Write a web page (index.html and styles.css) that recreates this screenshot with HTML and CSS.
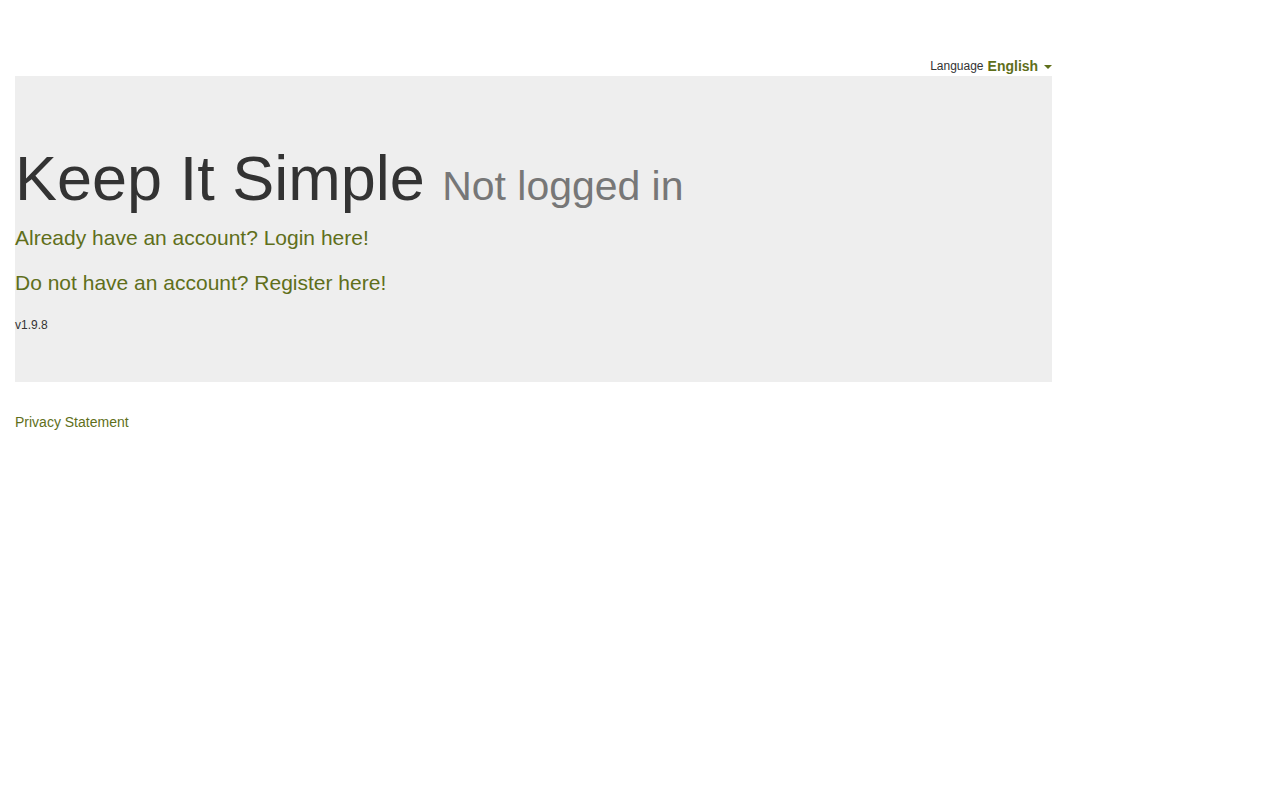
FILE: index.html
```html
<!DOCTYPE html>
<html lang="en">
<head>
    <meta charset="UTF-8">
    <title>Keep It Simple</title>
    <link rel="stylesheet" href="styles.css">
</head>
<body>
    <div class="container">
        <div class="lang-bar">
            <span class="lang-label">Language</span>
            <a href="#" class="lang-toggle">English <span class="caret"></span></a>
        </div>

        <div class="jumbotron">
            <h1>Keep It Simple <small>Not logged in</small></h1>
            <p><a href="#">Already have an account? Login here!</a></p>
            <p><a href="#">Do not have an account? Register here!</a></p>
            <div class="version">v1.9.8</div>
        </div>

        <footer class="footer">
            <a href="#">Privacy Statement</a>
        </footer>
    </div>
</body>
</html>
```

FILE: styles.css
```css
body {
    margin: 0;
    font-family: 'Liberation Sans', Arial, sans-serif;
    font-size: 14px;
    line-height: 1.42857;
    color: #333;
    background: #fff;
}

a {
    color: #5f6f1b;
    text-decoration: none;
}

.container {
    width: 1037px;
    padding: 0 15px;
}

/* Language picker */
.lang-bar {
    display: flex;
    justify-content: flex-end;
    align-items: center;
    gap: 4px;
    padding-top: 57px;
    height: 19px;
}

.lang-label {
    font-size: 12px;
}

.lang-toggle {
    font-size: 14px;
    font-weight: bold;
}

.caret {
    display: inline-block;
    width: 0;
    height: 0;
    margin-left: 2px;
    vertical-align: middle;
    border-top: 4px solid #5f6f1b;
    border-left: 4px solid transparent;
    border-right: 4px solid transparent;
}

/* Main panel */
.jumbotron {
    background: #eee;
    padding: 48px 0;
    margin-bottom: 30px;
}

.jumbotron h1 {
    margin: 20px 0 10px;
    font-size: 63px;
    font-weight: 500;
    line-height: 1.1;
    color: #333;
}

.jumbotron h1 small {
    font-size: 65%;
    font-weight: normal;
    color: #777;
}

.jumbotron p {
    margin: 0 0 15px;
    font-size: 21px;
    font-weight: 200;
}

.version {
    font-size: 12px;
    margin-top: 19px;
}

.footer {
    padding-top: 1px;
}
```
